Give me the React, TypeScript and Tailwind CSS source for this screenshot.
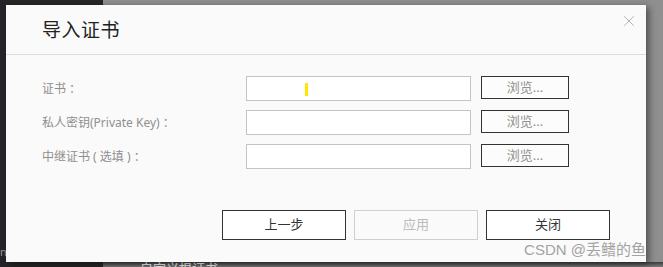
import { X } from 'lucide-react';

const font = { fontFamily: '"Noto Sans", "Noto Sans CJK SC", sans-serif' };

const rows = [
  { label: '证书 ：', cursor: true },
  { label: '私人密钥(Private Key) ：', cursor: false },
  { label: '中继证书 ( 选填 ) ：', cursor: false },
];

export default function App() {
  return (
    <div
      className="relative w-[663px] h-[267px] overflow-hidden grid grid-cols-[103px_1fr] bg-[#8f8f8f]"
      style={font}
    >
      {/* page behind the modal */}
      <div className="flex flex-col bg-[#262626]">
        <div className="flex-1 flex">
          <div className="w-[6px] bg-[#24252a] flex flex-col justify-end pb-[10px] text-[11px] text-[#999] leading-none overflow-hidden">
            <span>n</span>
          </div>
          <div className="flex-1" />
        </div>
      </div>
      <div className="flex flex-col">
        <div className="flex-1" />
        <div className="h-[5px] bg-gradient-to-b from-[#3e3e3e] to-[#7a7a7a] pl-[37px] overflow-hidden">
          <span className="block text-[13px] leading-[13px] text-[#eee]">自定义根证书</span>
        </div>
      </div>

      {/* modal */}
      <div className="absolute left-[6px] top-[5px] w-[640px] h-[257px] bg-[#fafafa] shadow-[3px_2px_7px_rgba(0,0,0,0.45)] flex flex-col">
        <div className="h-[50px] flex items-center justify-between pl-[36px] pr-[8px] border-b border-[#dcdcdc]">
          <h1 className="text-[19px] text-[#222] font-normal tracking-[0.5px] pt-[1px]">导入证书</h1>
          <button className="self-start mt-[7px] text-[#9a9a9a]" aria-label="close">
            <X size={18} strokeWidth={1} />
          </button>
        </div>

        <div className="flex flex-col gap-[9px] pt-[21px] pl-[36px]">
          {rows.map((r) => (
            <div key={r.label} className="flex items-center h-[25px]">
              <span className="w-[204px] text-[12px] text-[#8f8f8f] whitespace-pre">{r.label}</span>
              <div className="relative w-[225px] h-[25px] bg-white border border-[#c4c4c4]">
                {r.cursor && (
                  <span className="absolute left-[58px] top-[6px] w-[3px] h-[13px] bg-[#ffe600]" />
                )}
              </div>
              <button className="ml-[10px] w-[88px] h-[23px] self-start border border-[#333] bg-[#fcfcfc] text-[13px] text-[#909090] leading-none">
                浏览...
              </button>
            </div>
          ))}
        </div>

        <div className="flex justify-end gap-[8px] pr-[36px] mt-[41px]">
          <button className="w-[124px] h-[30px] border border-[#333] bg-white text-[13px] text-[#333]">上一步</button>
          <button className="w-[124px] h-[30px] border border-[#d0d0d0] bg-[#fafafa] text-[13px] text-[#bbb]">应用</button>
          <button className="w-[124px] h-[30px] border border-[#333] bg-white text-[13px] text-[#333]">关闭</button>
        </div>
      </div>

      {/* watermark */}
      <span
        className="absolute right-[17px] top-[240px] text-[15px] leading-[20px] text-[#a3a3a3] whitespace-nowrap"
        style={{ fontFamily: '"Liberation Sans", "Noto Sans CJK SC", sans-serif' }}
      >
        CSDN @丢鳍的鱼
      </span>
    </div>
  );
}
